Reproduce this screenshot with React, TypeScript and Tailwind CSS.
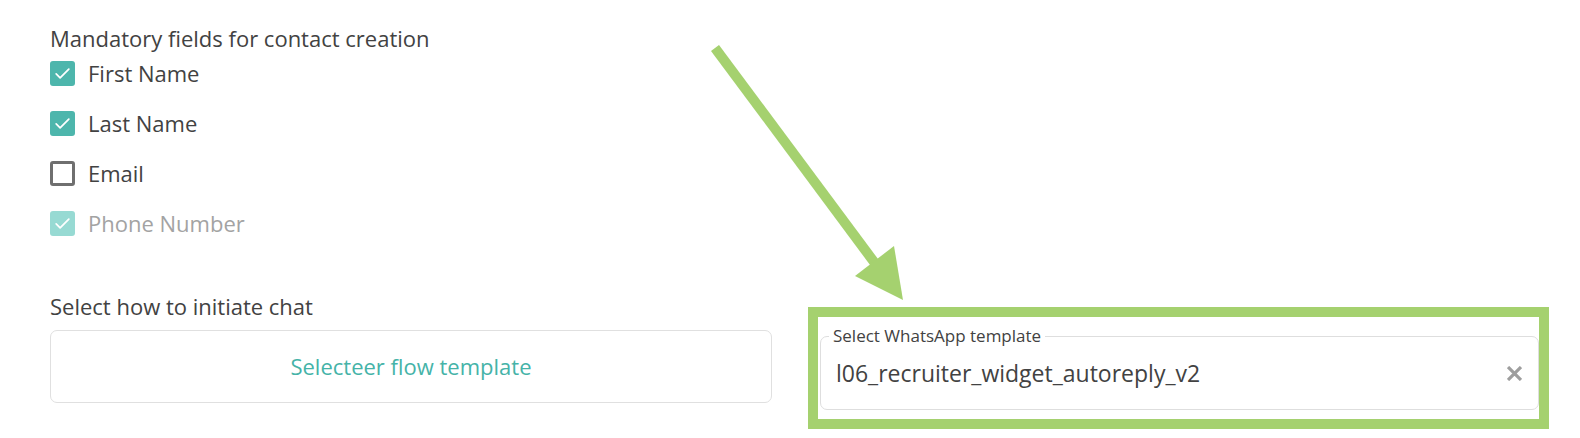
import React from 'react';

const font = { fontFamily: '"Open Sans", Lato, sans-serif' };

interface FieldOption {
  label: string;
  checked: boolean;
  disabled?: boolean;
}

const fields: FieldOption[] = [
  { label: 'First Name', checked: true },
  { label: 'Last Name', checked: true },
  { label: 'Email', checked: false },
  { label: 'Phone Number', checked: true, disabled: true },
];

const CheckBox: React.FC<FieldOption> = ({ label, checked, disabled }) => {
  const boxClass = checked
    ? disabled
      ? 'bg-[#97dad3]'
      : 'bg-[#4db6ac]'
    : 'border-[3px] border-[#6f6f6f] bg-white';

  return (
    <label className="flex h-[25px] items-center gap-[13px]">
      <span className={`flex h-[25px] w-[25px] items-center justify-center rounded-[3px] ${boxClass}`}>
        {checked && (
          <svg width="19" height="19" viewBox="0 0 24 24" fill="none" stroke="white" strokeWidth="2.2" strokeLinecap="round" strokeLinejoin="round">
            <path d="M4 12.5l5 5L20 6.5" />
          </svg>
        )}
      </span>
      <span className={`text-[22px] leading-[25px] ${disabled ? 'text-[#a3a3a3]' : 'text-[#424242]'}`}>{label}</span>
    </label>
  );
};

export default function App() {
  return (
    <div className="relative h-[438px] w-[1580px] overflow-hidden bg-white" style={font}>
      <div className="pl-[50px] pt-[24px]">
        {/* Mandatory fields */}
        <h3 className="text-[22px] leading-[28px] text-[#424242]">Mandatory fields for contact creation</h3>
        <div className="mt-[9px] flex flex-col gap-[25px]">
          {fields.map((f) => (
            <CheckBox key={f.label} {...f} />
          ))}
        </div>

        {/* Initiate chat */}
        <div className="mt-[56px] flex items-start gap-[36px]">
          <div className="flex w-[722px] flex-col">
            <p className="text-[22px] leading-[28px] text-[#424242]">Select how to initiate chat</p>
            <button className="mt-[10px] flex h-[73px] items-center justify-center rounded-[7px] border border-[#e0e0e0] bg-white text-[22px] font-medium text-[#45b3a8]">
              Selecteer flow template
            </button>
          </div>

          {/* highlighted template select */}
          <div className="mt-[15px] h-[122px] w-[741px] border-[10px] border-[#a5d16f] pt-[19px] pl-[2px]">
            <div className="relative flex h-[74px] items-center rounded-[7px] border border-[#dedede] pl-[15px] pr-[16px]">
              <span className="absolute -top-[12px] left-[8px] bg-white px-[4px] text-[17px] leading-[22px] text-[#424242]">
                Select WhatsApp template
              </span>
              <span className="flex-1 text-[23px] text-[#424242]">l06_recruiter_widget_autoreply_v2</span>
              <svg width="15" height="15" viewBox="0 0 14 14" stroke="#9e9e9e" strokeWidth="3" strokeLinecap="square">
                <path d="M2 2l10 10M12 2L2 12" />
              </svg>
            </div>
          </div>
        </div>
      </div>

      {/* annotation arrow */}
      <svg className="pointer-events-none absolute left-0 top-0" width="1580" height="438">
        <line x1="715" y1="48" x2="880" y2="270" stroke="#a5d16f" strokeWidth="10" />
        <polygon points="903,300 855,276 894,246" fill="#a5d16f" />
      </svg>
    </div>
  );
}
